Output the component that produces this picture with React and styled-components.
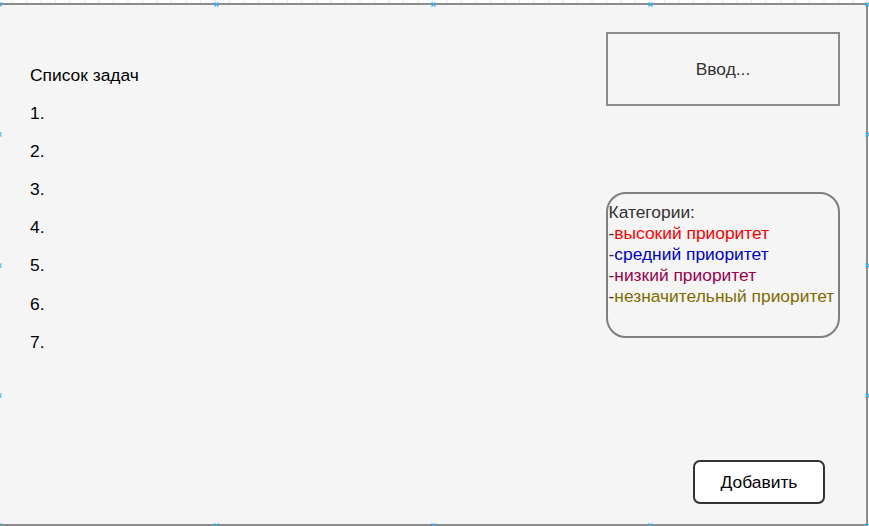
import React from "react";
import styled, { createGlobalStyle } from "styled-components";

const Global = createGlobalStyle`
  html, body { margin: 0; padding: 0; background: #fff; overflow: hidden; }
  body { font-family: "Liberation Sans", Arial, Helvetica, sans-serif; }
`;

const Page = styled.div`
  width: 869px;
  height: 526px;
  box-sizing: border-box;
  padding-top: 3px;
  overflow: hidden;
  background-color: #fff;
  background-image: linear-gradient(90deg, #e6e6e6 1px, transparent 1px);
  background-size: 14.5px 100%;
  background-position: 11.5px 0;
`;

const Frame = styled.div`
  position: relative;
  margin-left: -2px;
  width: 870px;
  height: 523px;
  box-sizing: border-box;
  border: 2px solid #8c8c8c;
  background: #f5f5f5;
  display: flex;
  justify-content: space-between;
  padding: 0 26px 0 30px;
`;

const TaskColumn = styled.div`
  padding-top: 51px;
  display: flex;
  flex-direction: column;
  color: #000;
  font-size: 17.4px;
  line-height: 38.1px;
`;

const TaskRow = styled.div`
  white-space: nowrap;
`;

const SideColumn = styled.div`
  width: 234px;
  padding-top: 27px;
  display: flex;
  flex-direction: column;
`;

const InputBox = styled.div`
  height: 74px;
  box-sizing: border-box;
  border: 2px solid #8a8a8a;
  display: flex;
  align-items: center;
  justify-content: center;
  color: #333;
  font-size: 17.4px;
  padding-top: 1px;
`;

const Categories = styled.div`
  margin-top: 86px;
  height: 146px;
  box-sizing: border-box;
  border: 2px solid #7f7f7f;
  border-radius: 20px;
  padding: 7.5px 0 0 0.5px;
  font-size: 17.4px;
  line-height: 21px;
  color: #333;
  white-space: nowrap;
`;

const CategoryLine = styled.div`
  color: #333;
`;

const Priority = styled.span`
  color: ${(p) => p.$color};
`;

const AddButton = styled.div`
  margin-top: 122px;
  margin-left: 87px;
  width: 132px;
  height: 44px;
  box-sizing: border-box;
  background: #fff;
  border: 2px solid #333;
  border-radius: 7px;
  display: flex;
  align-items: center;
  justify-content: center;
  color: #000;
  font-size: 17.4px;
`;

const Marker = styled.svg`
  position: absolute;
  width: 5px;
  height: 5px;
  overflow: visible;
`;

const xs = [-1, 216, 433, 650, 867];
const ys = [134, 265, 395];
const points = [
  ...xs.map((x) => [x, 4]),
  ...xs.map((x) => [x, 525]),
  ...ys.map((y) => [-1, y]),
  ...ys.map((y) => [867, y]),
];

const Cross = ({ x, y }) => (
  <Marker style={{ left: x - 2.5, top: y - 5 - 2.5 }} viewBox="0 0 5 5">
    <path d="M0.5 0.5 L4.5 4.5 M4.5 0.5 L0.5 4.5" stroke="#29b6f2" strokeWidth="1.2" fill="none" />
  </Marker>
);

const tasks = ["Список задач", "1.", "2.", "3.", "4.", "5.", "6.", "7."];

export default function App() {
  return (
    <>
      <Global />
      <Page>
        <Frame>
          <TaskColumn>
            {tasks.map((t) => (
              <TaskRow key={t}>{t}</TaskRow>
            ))}
          </TaskColumn>
          <SideColumn>
            <InputBox>Ввод...</InputBox>
            <Categories>
              <CategoryLine>Категории:</CategoryLine>
              <CategoryLine>
                -<Priority $color="#ff0000">высокий приоритет</Priority>
              </CategoryLine>
              <CategoryLine>
                -<Priority $color="#0000cc">средний приоритет</Priority>
              </CategoryLine>
              <CategoryLine>
                -<Priority $color="#99004d">низкий приоритет</Priority>
              </CategoryLine>
              <CategoryLine>
                -<Priority $color="#806c00">незначительный приоритет</Priority>
              </CategoryLine>
            </Categories>
            <AddButton>Добавить</AddButton>
          </SideColumn>
          {points.map(([x, y], i) => (
            <Cross key={i} x={x} y={y} />
          ))}
        </Frame>
      </Page>
    </>
  );
}
